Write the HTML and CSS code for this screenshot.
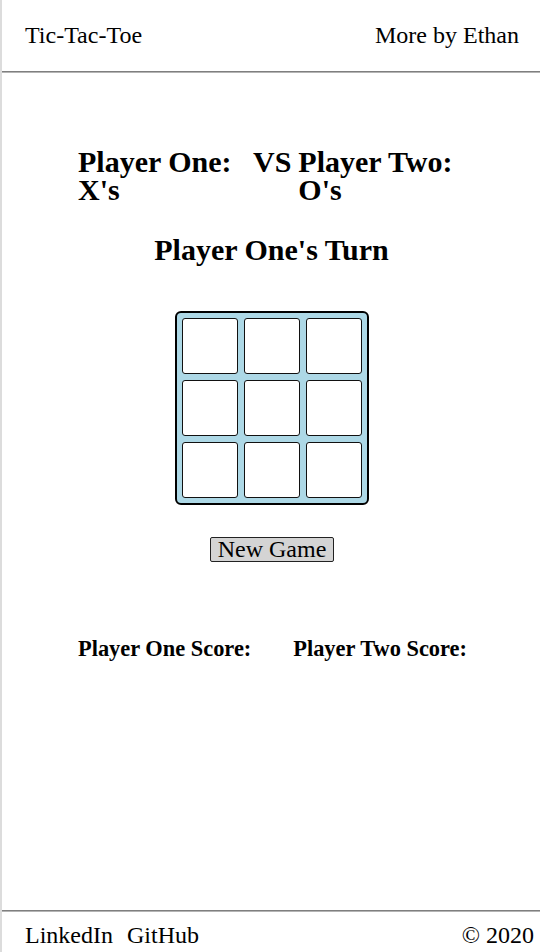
FILE: index.html
```html
<!DOCTYPE html>
<html lang="en">
<head>
<meta charset="utf-8">
<title>Tic-Tac-Toe</title>
<link rel="stylesheet" href="styles.css">
</head>
<body>
<div class="page">
  <header class="topbar">
    <span class="brand">Tic-Tac-Toe</span>
    <span class="more">More by Ethan</span>
  </header>
  <hr class="rule">
  <main class="main">
    <div class="players">
      <div class="player one">Player One: X's</div>
      <div class="vs">VS</div>
      <div class="player two">Player Two: O's</div>
    </div>
    <h2 class="turn">Player One's Turn</h2>
    <div class="board">
      <div class="cell"></div><div class="cell"></div><div class="cell"></div>
      <div class="cell"></div><div class="cell"></div><div class="cell"></div>
      <div class="cell"></div><div class="cell"></div><div class="cell"></div>
    </div>
    <button class="new-game" type="button">New Game</button>
    <div class="scores">
      <div class="score">Player One Score:</div>
      <div class="score">Player Two Score:</div>
    </div>
  </main>
  <hr class="rule">
  <footer class="footer">
    <div class="links">
      <span>LinkedIn</span>
      <span>GitHub</span>
    </div>
    <span class="copy">© 2020</span>
  </footer>
</div>
</body>
</html>
```

FILE: styles.css
```css
html, body {
  margin: 0;
  padding: 0;
  background: #ffffff;
}

body {
  font-family: "Liberation Serif", "Times New Roman", serif;
  color: #000;
}

.page {
  min-height: 952px;
  border-left: 2px solid #dcdcdc;
  display: flex;
  flex-direction: column;
  box-sizing: border-box;
}

.topbar {
  display: flex;
  justify-content: space-between;
  font-size: 24px;
  line-height: 28px;
  padding: 21px 21px 22px 23px;
}

.rule {
  margin: 0;
  height: 0;
  border: 0;
  border-top: 1px solid #7f7f7f;
  border-bottom: 1px solid #b4b4b4;
}

.main {
  flex: 1;
  display: flex;
  flex-direction: column;
  align-items: center;
}

.players {
  width: 386px;
  display: flex;
  margin-top: 75px;
  font-weight: bold;
  font-size: 30px;
  line-height: 28px;
}

.player.one {
  width: 175px;
  flex-shrink: 0;
}

.vs {
  margin-right: 7px;
}

.player.two {
  width: 165px;
}

.turn {
  margin: 29px 0 0 1px;
  font-size: 30px;
  line-height: 34px;
  font-weight: bold;
}

.board {
  margin: 44px 0 0 2px;
  display: grid;
  grid-template-columns: repeat(3, 56px);
  grid-template-rows: repeat(3, 56px);
  gap: 6px;
  padding: 5px;
  background: #add8e6;
  border: 2px solid #000;
  border-radius: 6px;
}

.cell {
  background: #fff;
  border: 1.5px solid #111;
  border-radius: 3px;
}

.new-game {
  margin: 32px 0 0 2px;
  font-family: "Liberation Serif", "Times New Roman", serif;
  font-size: 24px;
  line-height: 23px;
  padding: 0 6.5px;
  border: 1px solid #222;
  border-radius: 2px;
  background: #d4d4d4;
  color: #000;
}

.scores {
  width: 386px;
  display: flex;
  gap: 42px;
  margin-top: 74px;
  font-weight: bold;
  font-size: 22.4px;
  line-height: 26px;
}

.score {
  white-space: nowrap;
  flex-shrink: 0;
}

.footer {
  display: flex;
  justify-content: space-between;
  font-size: 24px;
  line-height: 28px;
  padding: 9px 6px 3px 23px;
}

.links {
  display: flex;
  gap: 14px;
}
```
